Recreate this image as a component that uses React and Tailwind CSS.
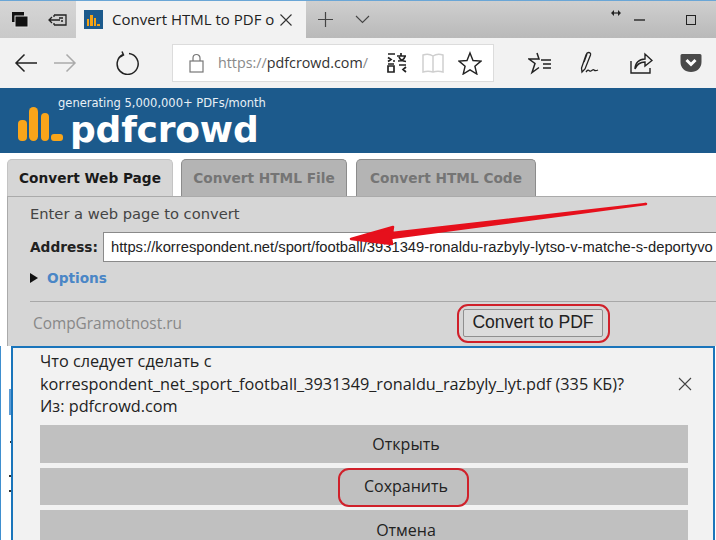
const sans = "font-['Open_Sans',sans-serif]"

function IconBtn({ className, children, w = 24, h = 24, vb }) {
  return (
    <svg width={w} height={h} viewBox={vb || `0 0 ${w} ${h}`} fill="none" stroke="currentColor" className={`shrink-0 ${className}`}>
      {children}
    </svg>
  )
}

function TabBar() {
  return (
    <div className="flex h-[37px] bg-gradient-to-b from-[#cfcfcf] to-[#b9b9b9]">
      <div className="flex w-[76px] shrink-0 items-center bg-gradient-to-b from-[#d6d6d6] to-[#c9c9c9] pl-[11px]">
        <IconBtn w={18} h={18} className="text-black">
          <rect x="1" y="1" width="12" height="10" fill="#111" stroke="none" />
          <rect x="4" y="5" width="13" height="11" fill="#111" stroke="#ddd" strokeWidth="1" />
        </IconBtn>
        <IconBtn w={20} h={16} className="ml-[19px] text-[#222]">
          <path d="M6 3h12v10H6M6 3v2M6 11v2M1 8h11M4 5L1 8l3 3M11 6h4M13 9h2" strokeWidth="1.3" />
        </IconBtn>
      </div>
      <div className={`flex w-[230px] shrink-0 items-center bg-[#f2f2f2] pl-[8px] text-[15px] text-[#222] ${sans}`}>
        <div className="flex h-[19px] w-[19px] items-end justify-center gap-[1px] bg-[#1c5a8c] pb-[3px]">
          <span className="h-[7px] w-[2px] bg-[#f6a313]" />
          <span className="h-[11px] w-[3px] bg-[#f6a313]" />
          <span className="h-[8px] w-[2px] bg-[#f6a313]" />
          <span className="h-[2px] w-[3px] bg-[#f6a313]" />
        </div>
        <span className="ml-[9px] w-[166px] whitespace-nowrap">Convert HTML to PDF o</span>
        <IconBtn w={14} h={14} className="ml-[1px] text-[#333]">
          <path d="M1.5 1.5l11 11M12.5 1.5l-11 11" strokeWidth="1.1" />
        </IconBtn>
      </div>
      <div className="flex flex-1 items-center">
        <IconBtn w={17} h={17} className="ml-[11px] text-[#444]">
          <path d="M8.5 1v15M1 8.500h15" strokeWidth="1.2" />
        </IconBtn>
        <IconBtn w={15} h={9} className="ml-[21px] text-[#444]">
          <path d="M1 1l6.500 6.500L14 1" strokeWidth="1.1" />
        </IconBtn>
        <div className="ml-auto flex items-center pr-[20px]">
          <IconBtn w={10} h={6} className="mr-[13px] -mt-[13px] text-[#222]">
            <path d="M2 3h6" strokeWidth="1.200" />
            <path d="M0 3l3-3v6zM10 3L7 0v6z" fill="currentColor" stroke="none" />
          </IconBtn>
          <span className="mr-[41px] h-[2px] w-[11px] bg-[#555]" />
          <span className="h-[10px] w-[10px] border border-[#222]" />
        </div>
      </div>
    </div>
  )
}

function Toolbar() {
  return (
    <div className="flex h-[50px] items-center bg-[#f2f2f2]">
      <IconBtn w={24} h={20} className="ml-[14px] text-[#222]">
        <path d="M23 10H2M10.500 1.500L2 10l8.500 8.500" strokeWidth="1.5" />
      </IconBtn>
      <IconBtn w={24} h={20} className="ml-[15px] text-[#aaa]">
        <path d="M1 10h21M13.500 1.500L22 10l-8.500 8.500" strokeWidth="1.5" />
      </IconBtn>
      <IconBtn w={24} h={24} className="ml-[38px] text-[#222]">
        <path d="M8 3.500A10.500 10.500 0 1 0 14 2.500M7 .5l1.500 3.500-3.500 2" strokeWidth="1.5" />
      </IconBtn>
      <div className={`ml-[33px] flex h-[38px] w-[322px] shrink-0 items-center border border-[#dcdcdc] bg-white text-[14.3px] ${sans}`}>
        <IconBtn w={15} h={20} className="ml-[16px] text-[#777]">
          <rect x="1" y="8" width="13" height="11" strokeWidth="1.2" />
          <path d="M4 8V5a3.500 3.500 0 0 1 7 0v3" strokeWidth="1.2" />
        </IconBtn>
        <span className="ml-[14px] text-[#8a8a8a]">https://</span>
        <span className="text-[#333]">pdfcrowd.com</span>
        <span className="text-[#8a8a8a]">/</span>
        <IconBtn w={22} h={22} className="ml-[18px] text-[#222]">
          <path d="M2 2h7M2 5.500l3 2-3 2M2 12h6M2 14h6v6H2zM9 9h-2M15 1v3M11 4h9M12 9c3 0 6-1.500 7-4.500M13 5c1 2.500 3 4 7 4.500M13 13h7M20 15l-3 2.500 3 2.500" strokeWidth="1.700" />
        </IconBtn>
        <IconBtn w={24} h={22} className="ml-[13px] text-[#cfcfcf]">
          <path d="M12 4C9 2 5 2 2 3v17c3-1 7-1 10 0 3-1 7-1 10 0V3c-3-1-7-1-10 1zM12 4v16" strokeWidth="1.5" />
        </IconBtn>
        <IconBtn w={24} h={24} className="ml-[13px] text-[#222]">
          <path d="M12 2l3 7.500 8 .6-6.100 5.100 1.900 7.800-6.800-4.200-6.800 4.200 1.900-7.800L1 10.100l8-.6z" strokeWidth="1.4" />
        </IconBtn>
      </div>
      <IconBtn w={24} h={24} className="ml-[34px] text-[#222]">
        <path d="M9 2l2 6h-10l6 4.500-3 9 7-5M13 9h10M15 13h8M15 17h8" strokeWidth="1.5" />
      </IconBtn>
      <IconBtn w={24} h={24} className="ml-[27px] text-[#222]">
        <path d="M9.500 1.500c1.500 0 2.500 1 2 2.500L6 18l-3 3-.5-4L7 4c.5-1.500 1.200-2.500 2.500-2.500zM5 11l3-8M7 21c3-4 3 0 5-1s2-2 3-1 2 1 4 0" strokeWidth="1.3" />
      </IconBtn>
      <IconBtn w={24} h={24} className="ml-[26px] text-[#222]">
        <path d="M2 10v12h19v-5M6 18c0-6 4-10 10-10V3l7 6.500L16 15v-4c-4 0-8 2-10 7z" strokeWidth="1.4" />
      </IconBtn>
      <svg width="22" height="22" viewBox="0 0 22 22" className="ml-[27px] shrink-0">
        <path d="M2 2h18a1.500 1.500 0 0 1 1.500 1.500V10c0 6-4.500 10-10.500 10S.5 16 .5 10V3.500A1.500 1.500 0 0 1 2 2z" fill="#4a4a4a" />
        <path d="M6.500 8L11 12.500 15.500 8" stroke="#fff" strokeWidth="3" fill="none" />
      </svg>
    </div>
  )
}

function Logo() {
  return (
    <div className="h-[64px] bg-[#1c5a8c] text-white font-['DejaVu_Sans',sans-serif]">
      <div className="pl-[58px] pt-[6px] text-[11.5px] leading-[16px] text-[#e8f0f6]">generating 5,000,000+ PDFs/month</div>
      <div className="-mt-[4px] flex items-start pl-[18px]">
        <svg width="46" height="36" viewBox="0 0 46 36" className="shrink-0">
          <g fill="#f9a51a">
            <rect x="0" y="13" width="9" height="21" rx="4" />
            <rect x="11" y="0" width="9" height="34" rx="4.500" />
            <rect x="23" y="6" width="8" height="28" rx="4" />
            <rect x="33" y="27" width="12" height="7" rx="3" />
          </g>
        </svg>
        <span className="ml-[6px] mt-[8px] text-[36px] font-bold leading-[30px] tracking-[-0.2px] text-white">pdfcrowd</span>
      </div>
    </div>
  )
}

function Tab({ active, children, className }) {
  return (
    <div
      className={`flex h-[37px] items-center justify-center rounded-t-[5px] border border-b-0 text-[13.7px] font-bold ${
        active ? 'border-[#c4c4c4] bg-[#d6d6d6] text-[#1a1a1a]' : 'border-[#8c8c8c] bg-[#b4b4b4] text-[#757575]'
      } ${className}`}
    >
      {children}
    </div>
  )
}

function Converter() {
  return (
    <div className="bg-white pl-[7px] pt-[6px] font-['DejaVu_Sans',sans-serif]">
      <div className="relative z-10 flex">
        <Tab active className="-mb-px w-[166px]">Convert Web Page</Tab>
        <Tab className="ml-[8px] w-[166px]">Convert HTML File</Tab>
        <Tab className="ml-[9px] w-[180px]">Convert HTML Code</Tab>
      </div>
      <div className="relative h-[150px] border-t border-l border-[#aaa] bg-[#d6d6d6] pl-[22px]">
        <div className="pt-[7px] text-[14.7px] leading-[20px] text-[#444]">Enter a web page to convert</div>
        <div className="mt-[8px] flex items-center">
          <span className="text-[13.7px] font-bold text-[#222]">Address:</span>
          <div className="ml-[5px] h-[30px] flex-1 overflow-hidden whitespace-nowrap border border-r-0 border-[#8a8a8a] bg-white pl-[7px] font-['Liberation_Sans',sans-serif] text-[14.75px] leading-[28px] text-[#222]">
            https://korrespondent.net/sport/football/3931349-ronaldu-razbyly-lytso-v-matche-s-deportyvo
          </div>
        </div>
        <div className="mt-[6px] flex items-center">
          <span className="h-0 w-0 border-y-[5px] border-l-[8px] border-y-transparent border-l-[#111]" />
          <span className="ml-[9px] text-[13.7px] font-bold text-[#4a86c6]">Options</span>
        </div>
        <div className="mt-[12px] border-t border-[#a8a8a8]" />
        <div className="flex items-center pt-[7px]">
          <span className="ml-[3px] mt-[3px] w-[430px] shrink-0 font-['Open_Sans',sans-serif] text-[15.4px] text-[#888]">CompGramotnost.ru</span>
          <div className="flex h-[28px] w-[140px] items-center justify-center rounded-[2px] border border-[#8f8f8f] bg-[#dcdcdc] font-['Liberation_Sans',sans-serif] text-[17.6px] text-[#222]">
            Convert to PDF
          </div>
        </div>
        <div className="absolute left-[449px] top-[107px] h-[39px] w-[153px] rounded-[11px] border-2 border-[#d0202a]" />
      </div>
    </div>
  )
}

function Choice({ children, className = '' }) {
  return <div className={`flex items-center justify-center bg-[#c0c0c0] pl-[84px] text-[16px] text-[#222] ${className}`}>{children}</div>
}

function Dialog() {
  return (
    <div className="flex h-[195px] overflow-hidden bg-white pr-px">
      <div className="flex w-[11px] shrink-0 flex-col border-l border-[#3f8fcf]">
        <span className="mt-[43px] ml-[8px] h-[26px] w-[2px] bg-[#5b9bd5]" />
        <span className="mt-[26px] ml-[9px] h-[2px] w-px bg-[#333]" />
        <span className="mt-[32px] ml-[8px] h-[2px] w-[2px] bg-[#333]" />
        <span className="mt-[13px] ml-[8px] h-[2px] w-[2px] bg-[#333]" />
      </div>
      <div className={`relative flex-1 border-2 border-b-0 border-[#1a75bb] bg-[#f2f2f2] pl-[27px] pr-[25px] ${sans}`}>
        <div className="pt-[2px] text-[16.25px] leading-[22.5px] text-[#222]">
          <div>Что следует сделать с</div>
          <div className="whitespace-nowrap">korrespondent_net_sport_football_3931349_ronaldu_razbyly_lyt.pdf (335 КБ)?</div>
          <div>Из: pdfcrowd.com</div>
        </div>
        <svg width="14" height="14" viewBox="0 0 14 14" stroke="#444" className="absolute right-[21px] top-[29px]">
          <path d="M1 1l12 12M13 1L1 13" strokeWidth="1.1" />
        </svg>
        <div className="mt-[7px] flex flex-col gap-[5px]">
          <Choice className="h-[38px]">Открыть</Choice>
          <Choice className="h-[37px]">Сохранить</Choice>
          <Choice className="h-[40px]">Отмена</Choice>
        </div>
        <div className="absolute left-[325px] top-[120px] h-[39px] w-[131px] rounded-[11px] border-2 border-[#d0202a]" />
      </div>
    </div>
  )
}

export default function App() {
  return (
    <div className="relative h-[540px] w-[716px] overflow-hidden border-t border-[#6aa6d6] bg-white">
      <TabBar />
      <Toolbar />
      <div className="h-px bg-[#1c5a8c]" />
      <Logo />
      <Converter />
      <Dialog />
      <svg width="716" height="540" className="pointer-events-none absolute left-0 top-0">
        <path d="M646 203 L392 232 L393 226 L351 238 L392 243 L391 237 Z" fill="#e6101c" stroke="#e6101c" strokeWidth="2.500" strokeLinejoin="round" />
      </svg>
    </div>
  )
}
